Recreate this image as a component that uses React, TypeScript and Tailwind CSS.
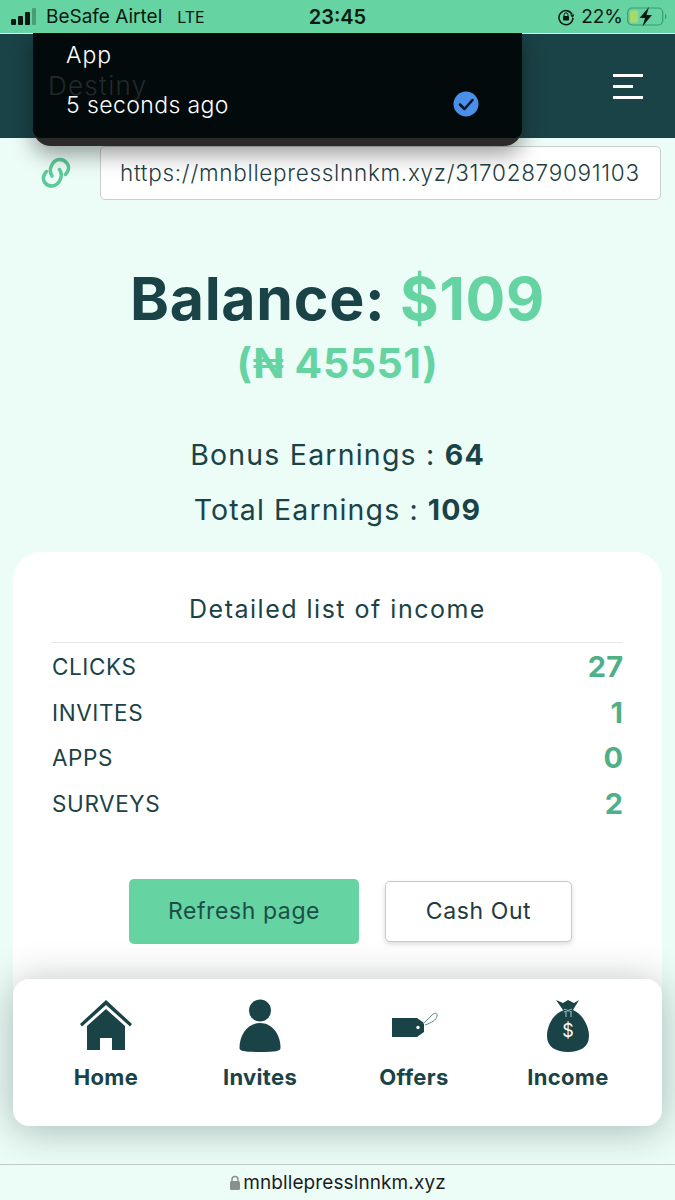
import React from "react";

const font = { fontFamily: '"Inter", "Liberation Sans", sans-serif' };

function Home() {
  return (
    <svg width="54" height="52" viewBox="0 0 54 52" fill="#1a4347">
      <path d="M27 0 L53 24 L51 26.500 L27 5 L3 26.500 L1 24 Z" />
      <path d="M27 9 L46 26 V50 H33 V38 H21 V50 H8 V26 Z" />
    </svg>
  );
}
function Person() {
  return (
    <svg width="42" height="54" viewBox="0 0 42 54" fill="#1a4347">
      <circle cx="21" cy="11.500" r="11" />
      <path d="M0.500 49 C0.500 35 9 24 21 24 C33 24 41.500 35 41.500 49 C41.500 52 37 53 21 53 C5 53 0.500 52 0.500 49 Z" />
    </svg>
  );
}
function Tag() {
  return (
    <svg width="48" height="28" viewBox="0 0 48 28" fill="none">
      <path d="M2 6 H27 L34 11 L34 20 L27 25 H2 Z" fill="#1a4347" />
      <circle cx="28" cy="15.500" r="1.700" fill="#ffffff" />
      <path d="M33 12 L42 3 C45 0 47.500 1 47 4 C46.500 8 41 11 35 13" stroke="#6b8588" strokeWidth="1" />
    </svg>
  );
}
function Bag() {
  return (
    <svg width="44" height="54" viewBox="0 0 44 54">
      <path d="M10 1 L17 4 L22 1 L28 4 L33 1 L27 11 L17 11 Z" fill="#1a4347" />
      <path d="M18 11 C6 15 1 28 1 37 C1 48 10 53 22 53 C34 53 43 48 43 37 C43 28 37 15 27 11 Z" fill="#1a4347" />
      <path d="M18 10 L26 13 M26 10 L18 13 M20 13 V18 M25 13 V18" stroke="#8fb0b0" strokeWidth="1.200" />
      <text x="22" y="38" textAnchor="middle" fontSize="18" fontWeight="400" fill="#ffffff" style={font}>$</text>
    </svg>
  );
}
function LinkIcon() {
  return (
    <svg width="30" height="34" viewBox="0 0 30 34" fill="none" stroke="#5cc99a" strokeWidth="3.500" strokeLinecap="round">
      <path d="M11 20 C7 14 11 4.500 18 3.500 C25 3 29 10 27 14.500 C26.500 16 25.500 17.500 24.500 18.500" />
      <path d="M18.500 13.500 C22.500 19 19 29 11.500 30 C4.500 30.500 1 24 3 19.500 C3.500 18 4.500 16.500 5.500 15.500" />
    </svg>
  );
}
function Battery() {
  return (
    <svg width="40" height="20" viewBox="0 0 40 20" fill="none">
      <rect x="0.700" y="1" width="35" height="17" rx="4.500" stroke="#3d9a72" strokeWidth="1.200" />
      <rect x="3" y="3.500" width="8" height="12" rx="1.500" fill="#a9d96a" />
      <path d="M38 7 C40 7.500 40 11.500 38 12 Z" fill="#3d9a72" />
      <path d="M22 0 L12.500 11 H18 L15.500 19.500 L25 8 H19.500 Z" fill="#0a1a12" />
    </svg>
  );
}
function Rotation() {
  return (
    <svg width="18" height="18" viewBox="0 0 18 18" fill="none">
      <path d="M15 6 A7 7 0 1 0 16 10" stroke="#0a1a12" strokeWidth="1.500" />
      <path d="M13 6.500 H17.500 L15.500 10 Z" fill="#0a1a12" />
      <rect x="6" y="8" width="6" height="4.500" rx="0.800" fill="#0a1a12" />
      <path d="M7 8 V6.800 A2 2 0 0 1 11 6.800 V8" stroke="#0a1a12" strokeWidth="1" />
    </svg>
  );
}

const rows = [
  ["CLICKS", "27"],
  ["INVITES", "1"],
  ["APPS", "0"],
  ["SURVEYS", "2"],
];
const nav: [string, React.ReactNode][] = [
  ["Home", <Home />],
  ["Invites", <Person />],
  ["Offers", <Tag />],
  ["Income", <Bag />],
];

export default function App() {
  return (
    <div className="relative flex h-[1200px] w-[675px] flex-col overflow-hidden bg-[#ecfcf7] text-[#1a4347]" style={font}>
      {/* status bar */}
      <div className="relative z-10 flex h-[33px] shrink-0 items-center bg-[#66d3a2] pl-[11px] pr-[8px] text-[#0a1a12]">
        <div className="flex items-end gap-[2px] pb-[1px]">
          <span className="h-[6px] w-[5px] rounded-[1px] bg-[#0a1a12]" />
          <span className="h-[9px] w-[5px] rounded-[1px] bg-[#0a1a12]" />
          <span className="h-[13px] w-[5px] rounded-[1px] bg-[#0a1a12]" />
          <span className="h-[17px] w-[4px] rounded-[1px] bg-[#4a9d79]" />
        </div>
        <span className="ml-[10px] text-[19px] leading-none">BeSafe Airtel</span>
        <span className="ml-[15px] text-[16px] leading-none">LTE</span>
        <span className="ml-[104px] text-[20px] font-semibold leading-none">23:45</span>
        <div className="ml-auto flex items-center">
          <Rotation />
          <span className="ml-[6px] text-[19px] leading-none">22%</span>
          <span className="ml-[4px] flex"><Battery /></span>
        </div>
      </div>

      {/* header */}
      <div className="mt-px flex h-[104px] shrink-0 items-center justify-end bg-[#1a4347] pr-[32px]">
        <div className="flex flex-col items-start gap-[8px]">
          <span className="h-[3px] w-[30px] bg-white" />
          <span className="h-[3px] w-[20px] bg-white" />
          <span className="h-[3px] w-[30px] bg-white" />
        </div>
      </div>

      {/* link row */}
      <div className="mt-[8px] flex shrink-0 items-center pl-[41px] pr-[14px]">
        <LinkIcon />
        <div className="ml-[29px] flex h-[54px] flex-1 items-center rounded-[5px] border border-[#c9cfcd] bg-white pl-[19px] text-[22.500px] font-light tracking-[0.7px] text-[#1f3f44]">
          https://mnbllepresslnnkm.xyz/31702879091103
        </div>
      </div>

      {/* balance */}
      <div className="mt-[64px] shrink-0 text-center text-[59px] font-bold leading-[70px] tracking-[0.7px]">
        Balance: <span className="text-[#66d3a2]">$109</span>
      </div>
      <div className="mt-[4px] shrink-0 text-center text-[41px] font-bold leading-[50px] tracking-[0.6px] text-[#66d3a2]">(₦ 45551)</div>
      <div className="mt-[49px] shrink-0 text-center text-[28.500px] leading-[36px] tracking-[1.2px]">
        Bonus Earnings : <b className="font-bold">64</b>
      </div>
      <div className="mt-[19px] shrink-0 text-center text-[28.500px] leading-[36px] tracking-[1.1px]">
        Total Earnings : <b className="font-bold">109</b>
      </div>

      {/* income card */}
      <div className="mx-[13px] mt-[24px] shrink-0 rounded-t-[28px] bg-white px-[39px] pb-[106px] pt-[41px]">
        <div className="border-b border-[#e3e6e5] pb-[17px] text-center text-[25px] leading-[32px] tracking-[1.5px]">Detailed list of income</div>
        <div className="mt-[1px] flex flex-col">
          {rows.map(([label, value]) => (
            <div key={label} className="flex h-[45.700px] items-center justify-between">
              <span className="text-[22.500px] tracking-[0.6px]">{label}</span>
              <span className="text-[29px] font-bold text-[#4fb088]">{value}</span>
            </div>
          ))}
        </div>
        <div className="mt-[52px] flex items-center pl-[77px]">
          <button className="flex h-[65px] w-[230px] items-center justify-center rounded-[5px] bg-[#66d3a2] text-[23px] tracking-[0.6px] text-[#1a4f47]">Refresh page</button>
          <button className="ml-[26px] flex h-[61px] w-[187px] items-center justify-center rounded-[5px] border border-[#c9c9c9] bg-white text-[23px] tracking-[0.6px] text-[#24393e] shadow-[0_2px_5px_rgba(0,0,0,0.15)]">Cash Out</button>
        </div>
      </div>

      {/* bottom nav overlay */}
      <div className="absolute left-[13px] top-[979px] grid h-[147px] w-[649px] grid-cols-4 rounded-[16px] bg-white pl-[16px] pr-[17px] shadow-[0_4px_40px_rgba(0,30,30,0.3)]">
        {nav.map(([label, icon]) => (
          <div key={label} className="flex flex-col items-center pt-[20px]">
            <div className="flex h-[54px] items-center">{icon}</div>
            <span className="mt-[10px] text-[22px] font-bold leading-[28px] tracking-[0.3px]">{label}</span>
          </div>
        ))}
      </div>

      {/* browser bar */}
      <div className="absolute inset-x-0 bottom-0 flex h-[36px] items-center justify-center border-t border-[#bfc9c7] bg-[#ecfcf7] text-[#1c1c1e]">
        <svg width="12" height="16" viewBox="0 0 12 16" className="mr-[2px]">
          <rect x="1" y="6" width="10" height="9" rx="1.500" fill="#8a8f8f" />
          <path d="M3 6.500 V4.500 A3 3 0 0 1 9 4.500 V6.500" stroke="#8a8f8f" strokeWidth="1.500" fill="none" />
        </svg>
        <span className="text-[19px] leading-none tracking-[0.1px]">mnbllepresslnnkm.xyz</span>
      </div>

      {/* notification toast */}
      <div className="absolute left-[33px] top-[33px] h-[113px] w-[489px] rounded-b-[18px] bg-[#2a2a2a] shadow-[0_8px_22px_rgba(0,0,0,0.4)]">
        <div className="relative h-[105px] rounded-b-[8px] bg-[#020a0c] pl-[33px] pt-[7px] text-white">
          <div className="text-[23px] font-light leading-[30px] tracking-[1px]">App</div>
          <div className="absolute left-[15px] top-[37px] text-[26px] font-light leading-[32px] tracking-[1.300px] text-[#23292b]">Destiny</div>
          <div className="mt-[20px] text-[23px] font-light leading-[30px] tracking-[0.4px]">5 seconds ago</div>
          <svg className="absolute left-[420px] top-[58px]" width="26" height="26" viewBox="0 0 26 26" fill="none">
            <circle cx="13" cy="13" r="12.500" fill="#4a8fe8" />
            <path d="M7 13.500 L11.500 18 L19.500 9" stroke="#04121c" strokeWidth="2.500" strokeLinecap="round" strokeLinejoin="round" />
          </svg>
        </div>
      </div>
    </div>
  );
}
